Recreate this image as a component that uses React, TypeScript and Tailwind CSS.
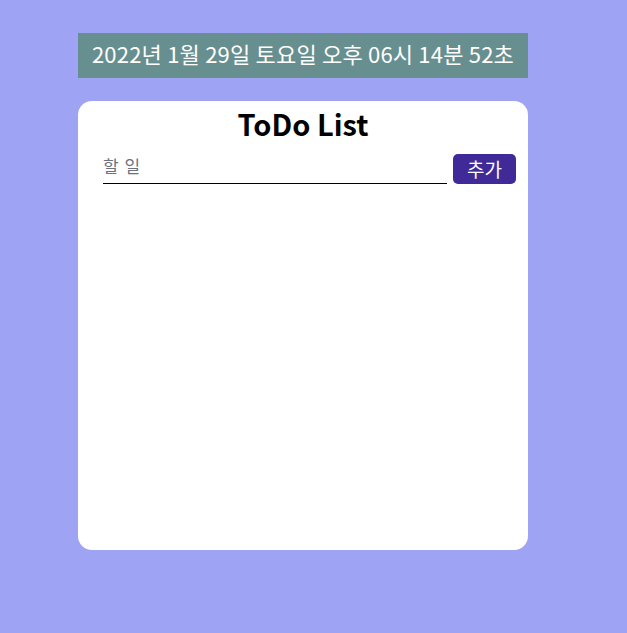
import { useState } from 'react';

const App = () => {
  const [todo, setTodo] = useState('');

  return (
    <div
      className="min-h-[633px] w-full bg-[#9fa3f3] pl-[78px] pt-[33px]"
      style={{ fontFamily: '"Noto Sans CJK KR", "Noto Sans", sans-serif' }}
    >
      <div className="flex h-[45px] w-[450px] items-center justify-center whitespace-nowrap bg-[#688f8f] pb-[4px] text-[22px] tracking-[0.2px] text-white">
        2022년 1월 29일 토요일 오후 06시 14분 52초
      </div>
      <div className="mt-[23px] flex h-[449px] w-[450px] flex-col rounded-[14px] bg-white">
        <h1 className="pt-[2px] text-center text-[29px] font-bold leading-[40px] text-black">
          ToDo List
        </h1>
        <form
          className="mt-[10px] flex items-end pl-[25px] pr-[12px]"
          onSubmit={(e) => {
            e.preventDefault();
            setTodo('');
          }}
        >
          <input
            type="text"
            value={todo}
            onChange={(e) => setTodo(e.target.value)}
            placeholder="할 일"
            className="h-[31px] w-[344px] border-b border-black px-0 pb-[5px] text-[17px] tracking-[1px] text-black placeholder:text-gray-500 focus:outline-none"
          />
          <button
            type="submit"
            className="ml-[6px] h-[30px] w-[63px] rounded-[5px] bg-[#3f2a97] text-[19px] leading-[30px] text-white"
          >
            추가
          </button>
        </form>
      </div>
    </div>
  );
};

export default App;
